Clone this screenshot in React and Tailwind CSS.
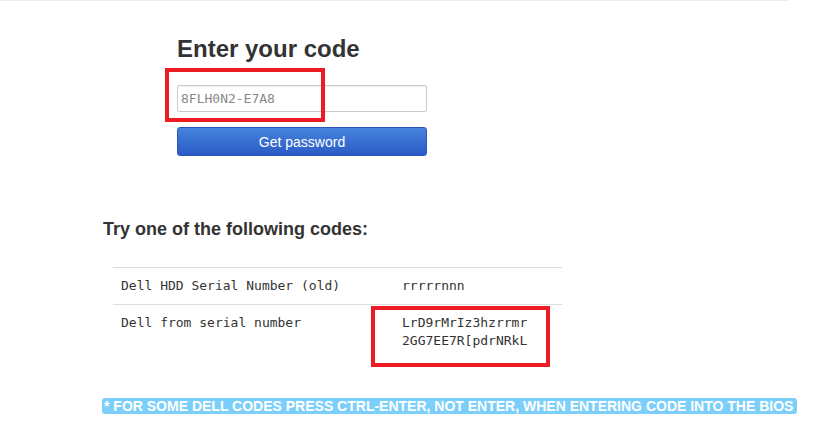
import React from 'react';

const codes = [
  { label: 'Dell HDD Serial Number (old)', value: ['rrrrrnnn'] },
  { label: 'Dell from serial number', value: ['LrD9rMrIz3hzrrmr', '2GG7EE7R[pdrNRkL'], marked: true },
];

export default function App() {
  return (
    <div className="relative w-[813px] h-[430px] bg-white overflow-hidden font-['Liberation_Sans',Arial,sans-serif] text-[#333]">
      <div className="h-px w-[788px] bg-[#eeeeee]" />

      {/* Code form */}
      <div className="ml-[177px] w-[250px] pt-[35px]">
        <h1 className="text-[24px] leading-[26px] font-bold">Enter your code</h1>
        <div className="relative mt-[23px]">
          <input
            readOnly
            value="8FLH0N2-E7A8"
            className="w-full h-[27px] px-[3px] border border-[#cccccc] rounded-[2px] bg-white font-['DejaVu_Sans_Mono',monospace] text-[13px] text-[#888] outline-none shadow-[inset_0_1px_1px_rgba(0,0,0,0.06)]"
          />
          {/* red annotation */}
          <div className="absolute left-[-12px] top-[-17px] w-[160px] h-[54px] border-4 border-[#ec1c24]" />
        </div>
        <button className="mt-[15px] w-full h-[29px] rounded-[3px] border border-[#2a55b8] bg-gradient-to-b from-[#4683dd] to-[#2b5bc6] text-white text-[14px] leading-none">
          Get password
        </button>
      </div>

      {/* Codes list */}
      <div className="ml-[103px] mt-[63px]">
        <h2 className="text-[18px] leading-[20px] font-bold">Try one of the following codes:</h2>
        <table className="relative ml-[10px] mt-[28px] w-[449px] border-collapse font-['DejaVu_Sans_Mono',monospace] text-[13px] leading-[18px]">
          <tbody>
            {codes.map((c) => (
              <tr key={c.label} className="border-t border-[#dddddd] align-top">
                <td className="w-[281px] pl-[8px] py-[9px]">{c.label}</td>
                <td className="relative pl-[8px] py-[9px]">
                  {c.value.map((v) => (
                    <div key={v}>{v}</div>
                  ))}
                  {c.marked && (
                    <div className="absolute left-[-23px] top-[1px] w-[179px] h-[61px] border-4 border-[#ec1c24]" />
                  )}
                </td>
              </tr>
            ))}
          </tbody>
        </table>
      </div>

      {/* Note */}
      <div className="ml-[102px] mt-[39px] w-[695px] h-[16px] rounded-[3px] bg-[#7dcffb] text-white font-bold text-[14px] leading-[16px] pl-[2px] whitespace-nowrap">
        * FOR SOME DELL CODES PRESS CTRL-ENTER, NOT ENTER, WHEN ENTERING CODE INTO THE BIOS
      </div>
    </div>
  );
}
